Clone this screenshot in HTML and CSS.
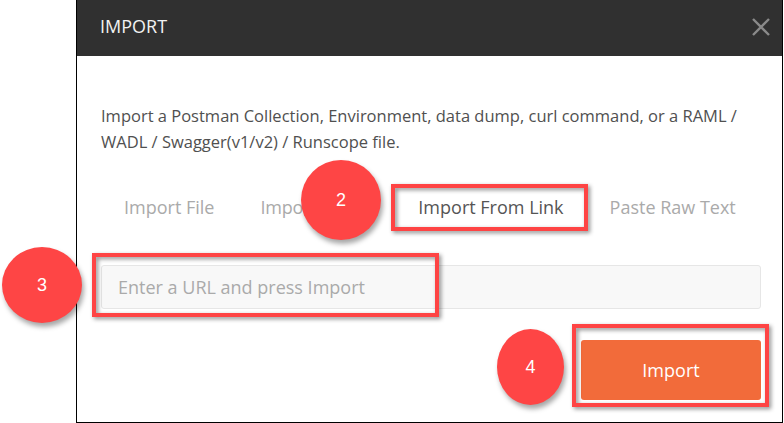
FILE: index.html
```html
<!DOCTYPE html>
<html>
<head>
<meta charset="utf-8">
<link rel="stylesheet" href="styles.css">
</head>
<body>
<div class="dialog">
  <div class="header">
    <span class="title">IMPORT</span>
    <svg class="close" width="18" height="18" viewBox="0 0 18 18"><path d="M1 1 L17 17 M17 1 L1 17" stroke="#8a8a8a" stroke-width="2.4" fill="none"/></svg>
  </div>
  <div class="content">
    <p class="desc">Import a Postman Collection, Environment, data dump, curl command, or a RAML / WADL / Swagger(v1/v2) / Runscope file.</p>
    <div class="tabs">
      <span class="tab">Import File</span>
      <span class="tab narrow">Import Folder</span>
      <span class="tab active">Import From Link</span>
      <span class="tab">Paste Raw Text</span>
    </div>
    <input class="url" type="text" placeholder="Enter a URL and press Import">
    <div class="actions"><button class="btn">Import</button></div>
  </div>
</div>
<div class="box b2"></div>
<div class="box b3"></div>
<div class="box b4"></div>
<div class="mark m2">2</div>
<div class="mark m3">3</div>
<div class="mark m4">4</div>
</body>
</html>
```
FILE: styles.css
```css
html, body { margin: 0; padding: 0; background: #fff; }
body {
  width: 784px; height: 423px; overflow: hidden; position: relative;
  font-family: "Open Sans", "Noto Sans", sans-serif;
  padding-left: 76px; box-sizing: border-box;
}
.dialog {
  width: 707px; height: 423px; box-sizing: border-box;
  border: 1px solid #000; border-top: 0;
  display: flex; flex-direction: column;
}
.header {
  height: 56px; background: #303030; flex: none;
  display: flex; align-items: center; justify-content: space-between;
  padding: 0 12px 0 23px;
}
.title { color: #f2f2f2; font-size: 18px; padding-bottom: 4px; }
.close { display: block; margin-top: -3px; }
.content { padding: 0 21px 0 24px; display: flex; flex-direction: column; }
.desc {
  margin: 47px 0 0; font-size: 16.5px; line-height: 26px; color: #505050;
}
.tabs { display: flex; margin-top: 40px; height: 24px; align-items: center; }
.tab { font-size: 18px; color: #aaa; padding: 0 23px; white-space: nowrap; line-height: 24px; }
.tab.narrow { letter-spacing: -0.25px; }
.tab.active { color: #555; }
.url {
  margin-top: 46px; height: 44px; box-sizing: border-box;
  background: #f8f8f8; border: 1px solid #e6e6e6; border-radius: 3px;
  padding: 0 16px; font-family: "Open Sans", sans-serif; font-size: 18px; color: #555;
  outline: none;
}
.url::placeholder { color: #aaa; }
.actions { display: flex; justify-content: flex-end; margin-top: 31px; }
.btn {
  width: 180px; height: 60px; background: #f26b3a; border: 0; border-radius: 3px;
  color: #fff; font-family: "Open Sans", sans-serif; font-size: 18px;
}
.box {
  position: absolute; box-sizing: border-box; border: 4px solid #fe4444;
  filter: drop-shadow(2px 2px 2px rgba(0,0,0,0.45));
}
.b2 { left: 391px; top: 184px; width: 197px; height: 47px; }
.b3 { left: 92px; top: 253px; width: 347px; height: 64px; }
.b4 { left: 572px; top: 324px; width: 197px; height: 83px; }
.mark {
  position: absolute; background: #fe4545; border-radius: 50%;
  color: #fff; font-family: "Liberation Sans", Arial, sans-serif; font-size: 18px;
  display: flex; align-items: center; justify-content: center;
  box-shadow: 2px 4px 5px rgba(0,0,0,0.35);
}
.m2 { left: 301px; top: 160px; width: 80px; height: 80px; }
.m3 { left: 2px; top: 247px; width: 80px; height: 76px; }
.m4 { left: 497px; top: 329px; width: 67px; height: 76px; }
```
